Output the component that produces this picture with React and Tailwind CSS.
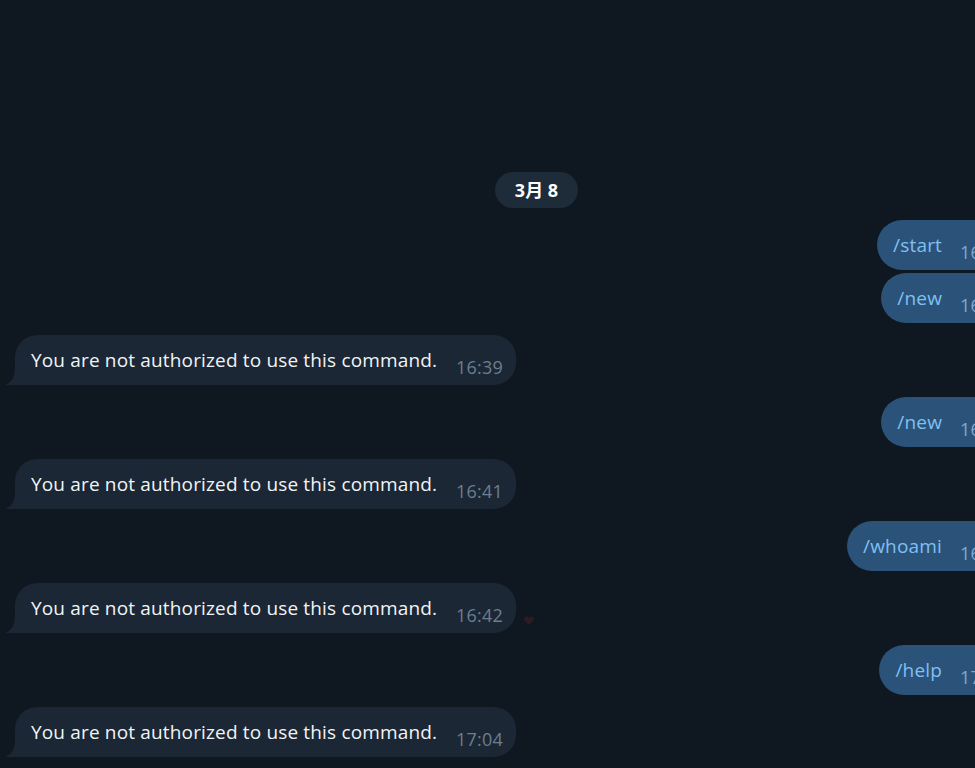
import React from 'react';

const messages = [
  { out: true, text: '/start', time: '16:38', mt: 'mt-[12px]' },
  { out: true, text: '/new', time: '16:38', mt: 'mt-[3px]' },
  { out: false, text: 'You are not authorized to use this command.', time: '16:39', mt: 'mt-[12px]' },
  { out: true, text: '/new', time: '16:41', mt: 'mt-[12px]' },
  { out: false, text: 'You are not authorized to use this command.', time: '16:41', mt: 'mt-[12px]' },
  { out: true, text: '/whoami', time: '16:42', mt: 'mt-[12px]' },
  { out: false, text: 'You are not authorized to use this command.', time: '16:42', mt: 'mt-[12px]', heart: true },
  { out: true, text: '/help', time: '17:03', mt: 'mt-[12px]' },
  { out: false, text: 'You are not authorized to use this command.', time: '17:04', mt: 'mt-[12px]' },
];

function Tail() {
  return (
    <svg className="absolute left-[-10px] bottom-0" width="12" height="18" viewBox="0 0 12 18">
      <path d="M12 0 L12 18 L0 18 C6 16 10 11 10 0 Z" fill="#1b2734" />
    </svg>
  );
}

function Incoming({ text, time, heart }) {
  return (
    <div className="flex items-end pl-[15px]">
      <div className="relative h-[50px] w-[501px] bg-[#1b2734] rounded-[22px] rounded-bl-none flex items-center pl-[16px] pr-[13px]">
        <Tail />
        <span className="text-[19px] leading-[26px] tracking-[0.16px] text-[#f1f4f7]">{text}</span>
        <span className="ml-auto mt-[14px] text-[18px] leading-[24px] tracking-[0.2px] text-[#6c7e8f]">{time}</span>
      </div>
      {heart && (
        <svg className="ml-[8px] mb-[8px]" width="10" height="9" viewBox="0 0 10 9">
          <path d="M5 9 L1 5 C-1 3 1 0 3 0.5 C4 0.8 5 2 5 2 C5 2 6 0.8 7 0.5 C9 0 11 3 9 5 Z" fill="#2e1a24" />
        </svg>
      )}
    </div>
  );
}

function Outgoing({ text, time }) {
  return (
    <div className="flex justify-end">
      <div className="h-[50px] bg-[#2b5278] rounded-l-[25px] rounded-r-[18px] flex items-center pl-[16px] pr-[14px]">
        <span className="text-[19px] leading-[26px] tracking-[0.2px] text-[#7fc0f4]">{text}</span>
        <span className="ml-[18px] mt-[14px] text-[18px] leading-[24px] text-[#7ea9d1]">{time}</span>
      </div>
    </div>
  );
}

export default function App() {
  return (
    <div
      className="w-[975px] h-[768px] overflow-hidden bg-[#0f1721]"
      style={{ fontFamily: '"Open Sans", "Noto Sans CJK SC", sans-serif' }}
    >
      <div className="w-[1020px] pt-[172px]">
        <div className="w-[975px] flex justify-center">
          <div className="h-[36px] px-[20px] ml-[98px] rounded-full bg-[#1e2c3a] flex items-center text-[18px] leading-[24px] font-bold text-white">
            3月 8
          </div>
        </div>
        {messages.map((m, i) => (
          <div key={i} className={m.mt}>
            {m.out ? <Outgoing text={m.text} time={m.time} /> : <Incoming text={m.text} time={m.time} heart={m.heart} />}
          </div>
        ))}
      </div>
    </div>
  );
}
